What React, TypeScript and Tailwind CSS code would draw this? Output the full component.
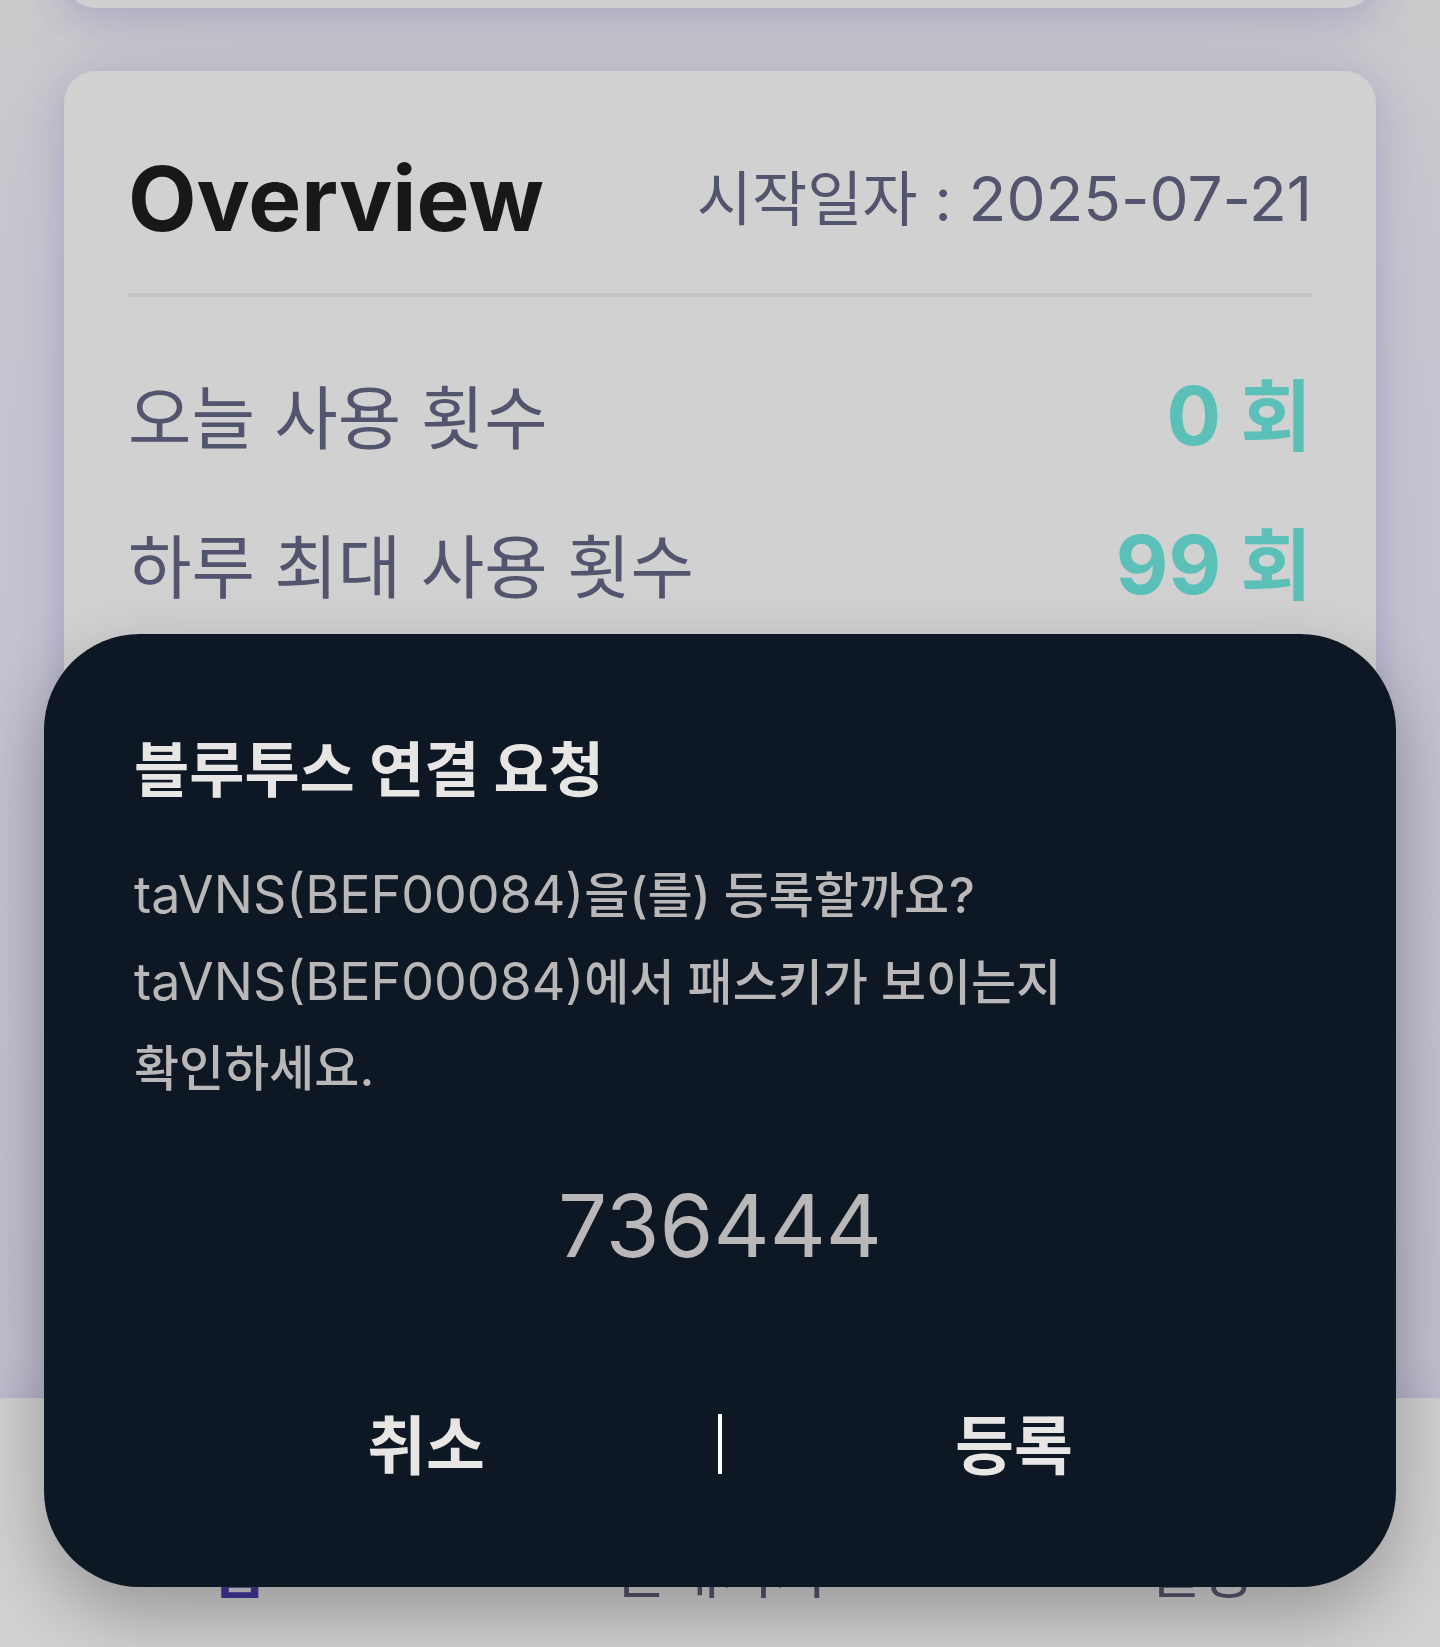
import React from "react";

const stats = [
  { label: "오늘 사용 횟수", count: 0 },
  { label: "하루 최대 사용 횟수", count: 99 },
];

const tabs = [
  { label: "홈", active: true },
  { label: "안내기기", active: false },
  { label: "설정", active: false },
];

const deviceName = "taVNS(BEF00084)";

const App: React.FC = () => {
  return (
    <div className="relative flex h-screen flex-col overflow-hidden bg-linear-to-b from-[#cbcbcd] via-[#c8c6d1] via-25% to-[#c3c1d0] font-['Inter','Noto_Sans_CJK_KR',sans-serif]">
      {/* PAGE CONTENT */}
      <main className="flex min-h-0 flex-1 flex-col gap-[63px] px-16">
        <div className="relative z-10 -mt-24 h-[104px] shrink-0 rounded-[32px] bg-[#d0d0d0] shadow-[0_8px_40px_rgba(70,55,170,0.22),0_8px_100px_rgba(70,55,170,0.05)]" />

        <section className="relative z-20 flex-1 rounded-t-[32px] bg-[#d1d1d1] px-16 pt-20 shadow-[0_8px_40px_rgba(70,55,170,0.22),0_16px_140px_rgba(70,55,170,0.06)]">
          <div className="flex items-center justify-between border-b-4 border-[#c5c6c7] pb-[46px]">
            <h1 className="text-[89px] leading-[96px] font-bold text-[#18181a]">
              Overview
            </h1>
            <p className="text-[60px] leading-[96px] text-[#53546e]">
              시작일자 : <time className="text-[62px]">2025-07-21</time>
            </p>
          </div>

          <dl className="mt-[74px] flex flex-col gap-[53px]">
            {stats.map((item) => (
              <StatRow key={item.label} label={item.label} count={item.count} />
            ))}
          </dl>
        </section>
      </main>

      {/* BOTTOM TABS */}
      <nav className="relative z-30 grid h-[249px] shrink-0 grid-cols-[480px_1fr_480px] items-end bg-[#d1d1d1] pb-[39px] shadow-[0_0_40px_rgba(70,55,170,0.14)]">
        {tabs.map((tab) => (
          <a
            key={tab.label}
            href="#"
            className={
              tab.active
                ? "text-center text-[58px] leading-[72px] font-bold text-[#41389c]"
                : "text-center text-[58px] leading-[72px] text-[#53546e]"
            }
          >
            {tab.label}
          </a>
        ))}
      </nav>

      {/* PAIRING DIALOG */}
      <div
        role="dialog"
        aria-labelledby="pairing-title"
        className="absolute inset-x-11 bottom-[60px] z-40 rounded-[96px] bg-[#0e1724] px-[90px] pt-[88px] pb-[94px] shadow-[0_28px_70px_rgba(0,0,0,0.27)]"
      >
        <h2
          id="pairing-title"
          className="text-[60px] leading-[96px] font-bold text-[#e8e6e5]"
        >
          블루투스 연결 요청
        </h2>
        <p className="mt-[34px] text-[49px] leading-[86px] font-medium text-[#bab7b8]">
          <DeviceName />
          을(를) 등록할까요?
          <br />
          <DeviceName />
          에서 패스키가 보이는지
          <br />
          확인하세요.
        </p>
        <p className="mt-[58px] text-center text-[87px] leading-[112px] text-[#bab7b8]">
          736444
        </p>
        <div className="mt-[117px] flex items-start">
          <DialogButton label="취소" />
          <div className="mt-[15px] h-[60px] w-1 bg-white" />
          <DialogButton label="등록" />
        </div>
      </div>
    </div>
  );
};

const DeviceName = () => (
  <span className="text-[52px] font-normal">{deviceName}</span>
);

const StatRow = ({ label, count }: { label: string; count: number }) => (
  <div className="flex items-start justify-between">
    <dt className="text-[69px] leading-[96px] text-[#53546e]">{label}</dt>
    <dd className="text-[81px] leading-[90px] font-bold text-[#5bc1b8]">
      {count} <span className="text-[78px]">회</span>
    </dd>
  </div>
);

const DialogButton = ({ label }: { label: string }) => (
  <button
    type="button"
    className="flex-1 text-[64px] leading-[94px] font-bold text-[#e8e6e5]"
  >
    {label}
  </button>
);

export default App;
